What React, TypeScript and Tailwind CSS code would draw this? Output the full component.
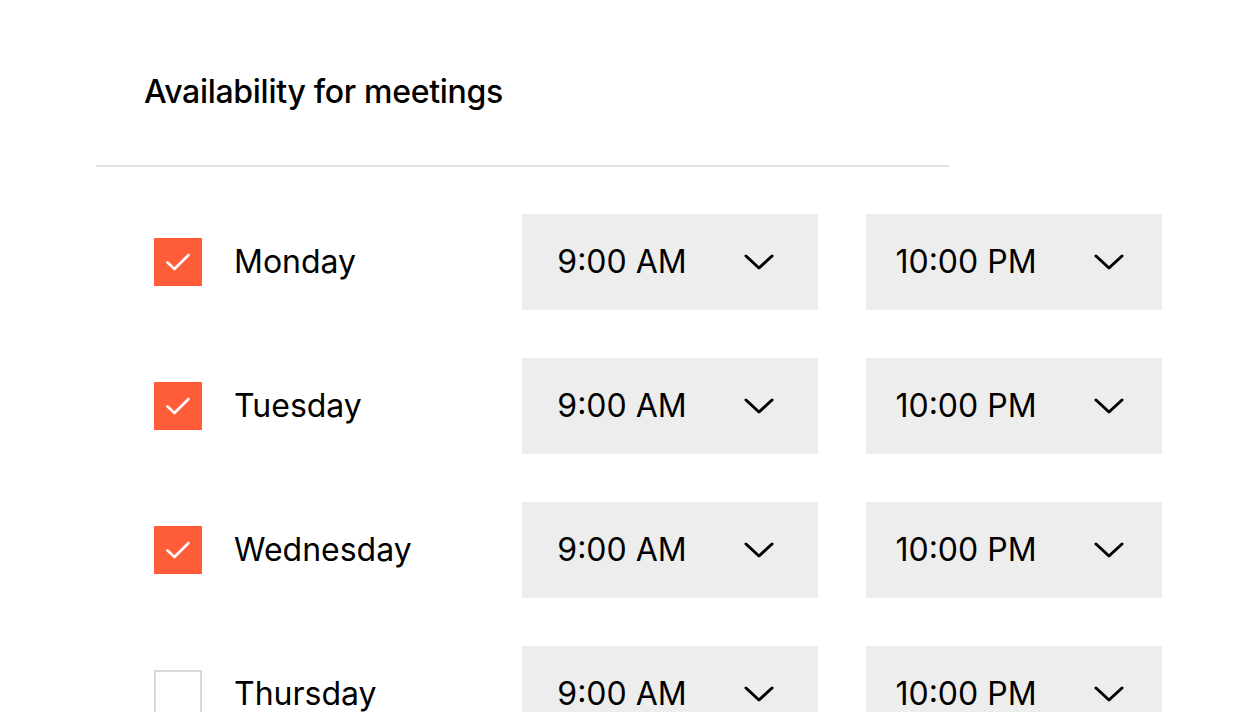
import React from "react";

const days = [
  { name: "Monday", checked: true },
  { name: "Tuesday", checked: true },
  { name: "Wednesday", checked: true },
  { name: "Thursday", checked: false },
  { name: "Friday", checked: false },
];

function Chevron() {
  return (
    <svg width="30" height="16" viewBox="0 0 30 16" fill="none" className="shrink-0">
      <path d="M2 2 L15 14 L28 2" stroke="#000" strokeWidth="3" strokeLinecap="round" strokeLinejoin="round" />
    </svg>
  );
}

function Select({ value }: { value: string }) {
  return (
    <div className="w-[296px] h-[96px] bg-[#ededed] flex items-center justify-center gap-[57px] pr-[9px] shrink-0">
      <span className="text-[32px] leading-none text-black">{value}</span>
      <Chevron />
    </div>
  );
}

function Checkbox({ checked }: { checked: boolean }) {
  if (checked) {
    return (
      <div className="w-[48px] h-[48px] bg-[#ff5c39] flex items-center justify-center shrink-0">
        <svg width="26" height="20" viewBox="0 0 26 20" fill="none">
          <path d="M2.5 10.5 L9.5 17 L23.5 3" stroke="#fff" strokeWidth="2.6" strokeLinecap="round" strokeLinejoin="round" />
        </svg>
      </div>
    );
  }
  return <div className="w-[48px] h-[48px] border-2 border-[#d9d9d9] bg-white shrink-0" />;
}

export default function App() {
  return (
    <div
      className="w-[1240px] h-[712px] overflow-hidden bg-white text-black"
      style={{ fontFamily: "Inter, 'Noto Sans', sans-serif" }}
    >
      <div className="pt-[72px] pl-[96px]">
        <h1 className="pl-[48px] text-[32px] leading-[40px] font-medium tracking-[-0.3px]">Availability for meetings</h1>
        <div className="mt-[53px] w-[853px] h-[2px] bg-[#e3e3e3]" />
        <div className="mt-[47px] pl-[58px] flex flex-col gap-[48px]">
          {days.map((d) => (
            <div key={d.name} className="flex items-center h-[96px]">
              <div className="w-[368px] flex items-center gap-[32px]">
                <Checkbox checked={d.checked} />
                <span className="text-[32px] leading-none">{d.name}</span>
              </div>
              <div className="flex gap-[48px]">
                <Select value="9:00 AM" />
                <Select value="10:00 PM" />
              </div>
            </div>
          ))}
        </div>
      </div>
    </div>
  );
}
